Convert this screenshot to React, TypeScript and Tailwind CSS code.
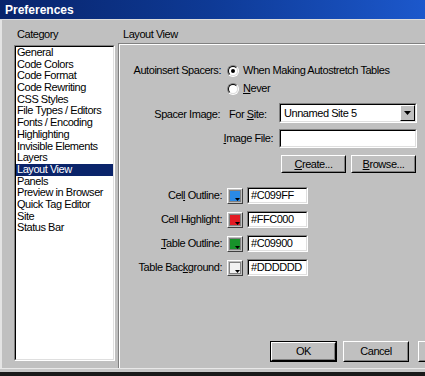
import React from 'react';

const categories = [
  'General',
  'Code Colors',
  'Code Format',
  'Code Rewriting',
  'CSS Styles',
  'File Types / Editors',
  'Fonts / Encoding',
  'Highlighting',
  'Invisible Elements',
  'Layers',
  'Layout View',
  'Panels',
  'Preview in Browser',
  'Quick Tag Editor',
  'Site',
  'Status Bar',
];

const colorRows = [
  { label: 'Cell Outline:', u: 3, swatch: 'bg-[#2b8ae6]', value: '#C099FF' },
  { label: 'Cell Highlight:', u: -1, swatch: 'bg-[#e31b23]', value: '#FFC000' },
  { label: 'Table Outline:', u: 0, swatch: 'bg-[#17922a]', value: '#C09900' },
  { label: 'Table Background:', u: 9, swatch: 'bg-[#f2f2f2]', value: '#DDDDDD' },
];

// underline one letter like a Windows access key
function Key({ text, at }: { text: string; at: number }) {
  if (at < 0) return <>{text}</>;
  return (
    <>
      {text.slice(0, at)}
      <span className="underline">{text[at]}</span>
      {text.slice(at + 1)}
    </>
  );
}

function Sunken({ className, children }: { className: string; children?: React.ReactNode }) {
  return (
    <div className={`border border-t-[#808080] border-l-[#808080] border-r-white border-b-white ${className}`}>
      <div className="w-full h-full bg-white border border-t-black border-l-black border-r-[#dfdfdf] border-b-[#dfdfdf] flex items-center overflow-hidden">
        {children}
      </div>
    </div>
  );
}

function Button({ className, children, isDefault }: { className: string; children?: React.ReactNode; isDefault?: boolean }) {
  const inner = (
    <div className="w-full h-full border border-t-white border-l-white border-r-black border-b-black">
      <div className="w-full h-full flex items-center justify-center border border-transparent border-r-[#808080] border-b-[#808080]">
        {children}
      </div>
    </div>
  );
  if (isDefault) return <div className={`border border-black shrink-0 ${className}`}>{inner}</div>;
  return <div className={`shrink-0 ${className}`}>{inner}</div>;
}

function Radio({ checked }: { checked?: boolean }) {
  return (
    <div className="w-[12px] h-[12px] shrink-0 rounded-full border border-t-[#808080] border-l-[#808080] border-r-white border-b-white">
      <div className="w-full h-full rounded-full bg-white border border-t-black border-l-black border-r-[#dfdfdf] border-b-[#dfdfdf] flex items-center justify-center">
        {checked && <div className="w-[4px] h-[4px] rounded-full bg-black" />}
      </div>
    </div>
  );
}

export default function App() {
  return (
    <div
      className="w-[425px] h-[376px] bg-[#c0c0c0] flex flex-col overflow-hidden text-[11px] tracking-[-0.45px] text-black"
      style={{ fontFamily: '"Liberation Sans", Arial, sans-serif' }}
    >
      {/* title bar */}
      <div className="h-[19px] shrink-0 bg-gradient-to-r from-[#08246b] via-[#0e3a96] to-[#1c58cc] flex items-center pl-[5px]">
        <span className="text-white font-bold text-[12px] tracking-normal leading-none">Preferences</span>
      </div>
      <div className="h-[1px] shrink-0 bg-[#dcdcdc]" />

      <div className="flex-1 flex border-l-2 border-l-[#e4e4e4] min-h-0">
        {/* category list */}
        <div className="pl-[12px] pt-[8px] w-[113px] shrink-0 flex flex-col">
          <div className="pl-[3px] leading-[13px]">Category</div>
          <div className="mt-[4px] h-[316px] w-[101px] border border-t-[#808080] border-l-[#808080] border-r-white border-b-white">
            <div className="w-full h-full bg-white border border-t-black border-l-black border-r-[#dfdfdf] border-b-[#dfdfdf]">
              {categories.map((c) => (
                <div
                  key={c}
                  className={`pl-[1px] leading-[11.7px] h-[11.7px] whitespace-nowrap ${
                    c === 'Layout View' ? 'bg-[#0a246a] text-white' : ''
                  }`}
                >
                  {c}
                </div>
              ))}
            </div>
          </div>
        </div>

        {/* layout view panel */}
        <div className="flex-1 pl-[3px] pt-[8px] flex flex-col min-w-0">
          <div className="pl-[5px] leading-[13px]">Layout View</div>
          <div className="mt-[2px] flex-1 border-t border-l border-[#808080] flex">
            <div className="flex-1 border-t border-l border-white flex flex-col pb-[6px] min-w-0">
              <div className="mt-[19px] h-[13px] flex items-center">
                <div className="w-[101px] text-right shrink-0 whitespace-nowrap">Autoinsert Spacers:</div>
                <div className="ml-[6px]"><Radio checked /></div>
                <div className="ml-[4px] whitespace-nowrap">When Making Autostretch Tables</div>
              </div>
              <div className="mt-[5px] h-[13px] flex items-center">
                <div className="ml-[107px]"><Radio /></div>
                <div className="ml-[4px]"><Key text="Never" at={0} /></div>
              </div>

              <div className="mt-[8px] h-[20px] flex items-center">
                <div className="w-[100px] text-right shrink-0 pt-[3px] whitespace-nowrap">Spacer Image:</div>
                <div className="ml-[9px] w-[50px] shrink-0 pt-[3px] whitespace-nowrap">For <Key text="Site:" at={0} /></div>
                <Sunken className="w-[138px] h-[20px] shrink-0">
                  <span className="pl-[3px] flex-1 whitespace-nowrap">Unnamed Site 5</span>
                  <div className="w-[15px] h-full bg-[#c0c0c0] border border-t-white border-l-white border-r-black border-b-black flex items-center justify-center">
                    <svg width="7" height="4" viewBox="0 0 7 4">
                      <path d="M0 0h7L3.5 4z" fill="#000" />
                    </svg>
                  </div>
                </Sunken>
              </div>

              <div className="mt-[6px] h-[19px] flex items-center">
                <div className="w-[100px] shrink-0" />
                <div className="w-[59px] shrink-0 text-right pr-[6px] whitespace-nowrap"><Key text="Image File:" at={0} /></div>
                <Sunken className="w-[138px] h-[19px] shrink-0" />
              </div>

              <div className="mt-[7px] h-[18px] flex items-center">
                <div className="w-[161px] shrink-0" />
                <Button className="w-[65px] h-[18px]"><Key text="Create..." at={0} /></Button>
                <Button className="w-[65px] h-[18px] ml-[5px]"><Key text="Browse..." at={0} /></Button>
              </div>

              <div className="mt-[14px] flex flex-col gap-[7px]">
                {colorRows.map((r) => (
                  <div key={r.label} className="h-[17px] flex items-center">
                    <div className="w-[102px] shrink-0 text-right whitespace-nowrap"><Key text={r.label} at={r.u} /></div>
                    <div className="ml-[5px] w-[16px] h-[16px] shrink-0 border border-t-white border-l-white border-r-[#404040] border-b-[#404040] p-[1px]">
                      <div className={`relative w-full h-full ${r.swatch} border border-[#808080]`}>
                        <svg className="absolute right-0 bottom-0" width="5" height="3" viewBox="0 0 5 3">
                          <path d="M0 0h5L2.5 3z" fill="#000" />
                        </svg>
                      </div>
                    </div>
                    <Sunken className="ml-[4px] w-[61px] h-[17px] shrink-0">
                      <span className="pl-[2px]">{r.value}</span>
                    </Sunken>
                  </div>
                ))}
              </div>

              <div className="flex-1" />
              <div className="h-[21px] flex items-center">
                <div className="w-[150px] shrink-0" />
                <Button isDefault className="w-[67px] h-[21px]">OK</Button>
                <Button className="w-[66px] h-[21px] ml-[6px]">Cancel</Button>
                <Button className="w-[66px] h-[21px] ml-[9px]" />
              </div>
            </div>
          </div>
        </div>
      </div>

      {/* bottom edge */}
      <div className="h-[4px] shrink-0 border-t border-[#e8e8e8] bg-[#c8c8c8]" />
      <div className="h-[4px] shrink-0 bg-[#1a1a1a]" />
    </div>
  );
}
